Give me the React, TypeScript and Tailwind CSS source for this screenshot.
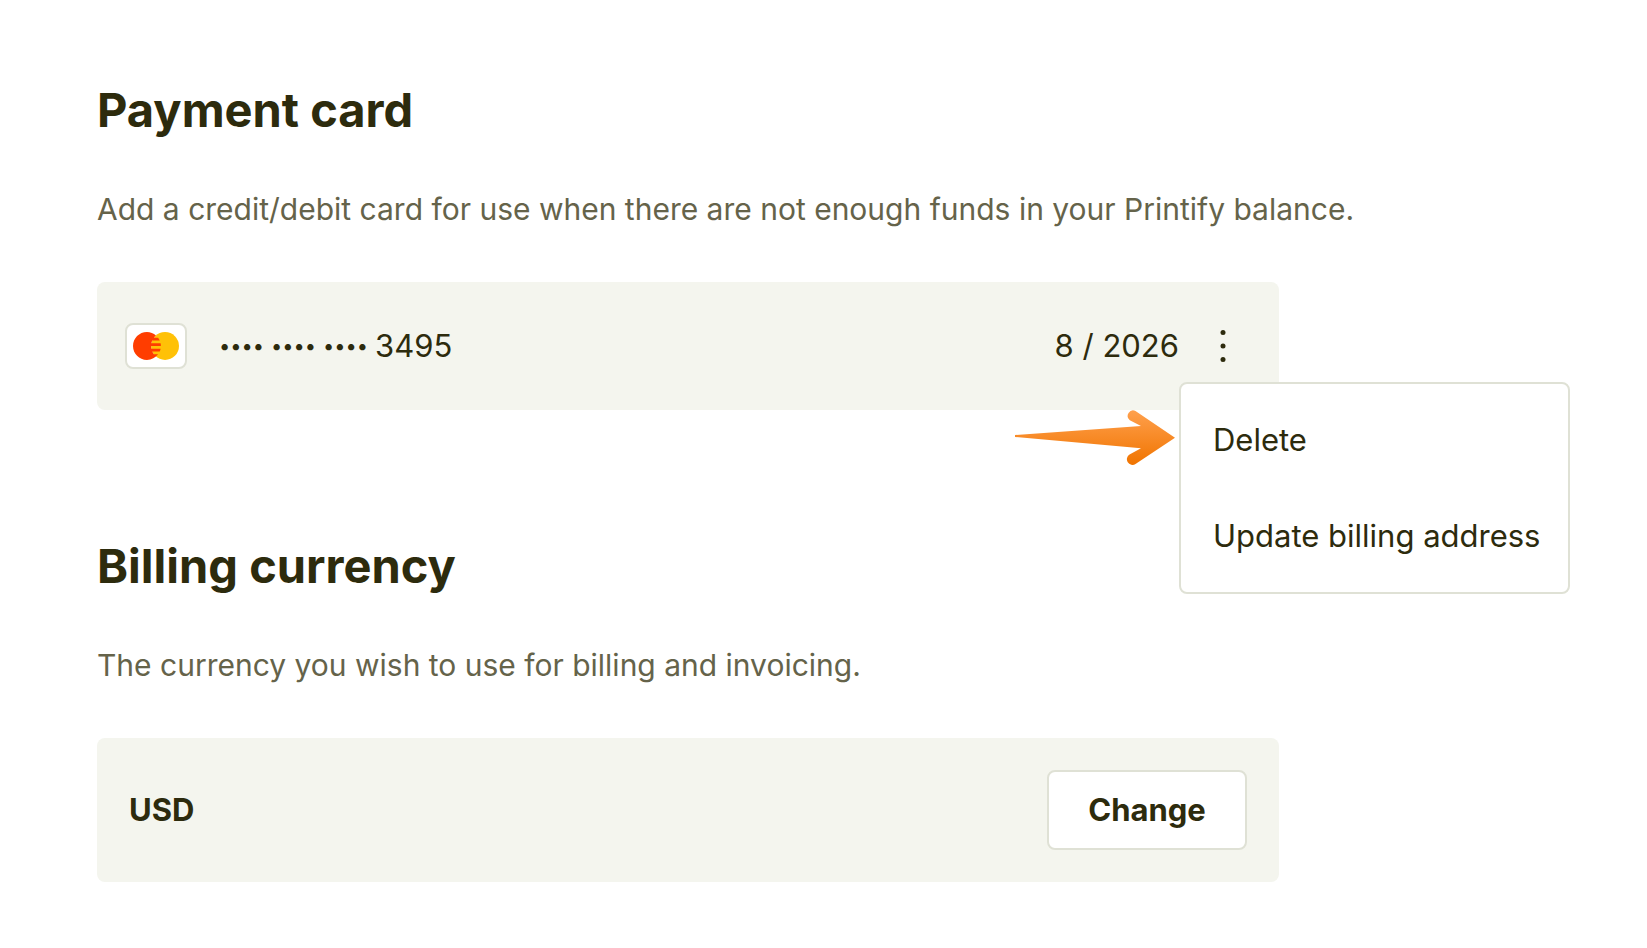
import { useState } from "react"

const menuItems = ["Delete", "Update billing address"]

function MastercardLogo() {
  return (
    <svg viewBox="7 14 33 20" className="h-7 w-[46px]" role="img" aria-label="Mastercard">
      <circle cx="30" cy="24" r="10" fill="#ffc107" />
      <path
        fill="#ff3d00"
        d="M22.014 30c-.464-.617-.863-1.284-1.176-2h5.325c.278-.636.496-1.304.637-2h-6.598C20.070 25.354 20 24.686 20 24h7c0-.686-.070-1.354-.201-2h-6.598c.142-.696.359-1.364.637-2h5.325c-.313-.716-.711-1.383-1.176-2h-2.973c.437-.580.930-1.122 1.481-1.595C21.747 14.909 19.481 14 17 14c-5.523 0-10 4.477-10 10s4.477 10 10 10c3.269 0 6.162-1.575 7.986-4H22.014z"
      />
    </svg>
  )
}

function ArrowPointer() {
  return (
    <svg viewBox="0 0 160 56" className="h-14 w-40" aria-hidden="true">
      <defs>
        <linearGradient id="arrow" x1="0" y1="0" x2="0" y2="1">
          <stop offset="0" stopColor="#ffa04d" />
          <stop offset="1" stopColor="#f07400" />
        </linearGradient>
      </defs>
      <path
        d="M0 25L126 16L114.800 10.200A5.500 5.500 0 0 1 120.500 0.900L160 27.700L120.500 54A5.500 5.500 0 0 1 114.500 44.500L126 38.200L0 27Z"
        fill="url(#arrow)"
      />
    </svg>
  )
}

export default function App() {
  const [open, setOpen] = useState(true)

  return (
    <main className="min-h-screen bg-white px-[97px] pt-[78px] pb-16 font-['Inter',sans-serif] text-[31px] leading-[48px] text-[#2d2b0d]">
      <section>
        <h1 className="text-[47px] leading-[64px] font-bold">Payment card</h1>
        <p className="mt-[43px] text-[30px] text-[#65634a]">
          Add a credit/debit card for use when there are not enough funds in your Printify balance.
        </p>

        <div className="relative mt-[49px] flex h-32 max-w-[1182px] items-center rounded-lg bg-[#f4f5ee] pr-8 pl-7">
          <div className="flex h-[46px] w-[62px] items-center justify-center rounded-lg border-2 border-[#dfe1d5] bg-white">
            <MastercardLogo />
          </div>
          <div className="ml-8 flex items-center gap-[7px]">
            {[0, 1, 2].map((n) => (
              <span key={n} className="text-[20px]">
                ••••
              </span>
            ))}
            <span>3495</span>
          </div>
          <span className="ml-auto">8 / 2026</span>
          <button
            type="button"
            aria-label="Card options"
            aria-expanded={open}
            onClick={() => setOpen(!open)}
            className="ml-5 flex size-12 items-center justify-center"
          >
            <svg viewBox="0 0 48 48" className="size-12" fill="currentColor">
              <circle cx="24" cy="10.500" r="2.500" />
              <circle cx="24" cy="24" r="2.500" />
              <circle cx="24" cy="37.500" r="2.500" />
            </svg>
          </button>

          {open && (
            <div className="absolute top-[100px] left-[calc(100%-100px)] w-[391px] rounded-lg border-2 border-[#dfe1d5] bg-white py-2">
              {menuItems.map((item) => (
                <button
                  key={item}
                  type="button"
                  className="block h-24 w-full pl-8 text-left whitespace-nowrap"
                >
                  {item}
                </button>
              ))}
              <div className="absolute top-[26px] right-full mr-1.5">
                <ArrowPointer />
              </div>
            </div>
          )}
        </div>
      </section>

      <section className="mt-[124px]">
        <h2 className="text-[47px] leading-[64px] font-bold">Billing currency</h2>
        <p className="mt-[43px] text-[30px] text-[#65634a]">
          The currency you wish to use for billing and invoicing.
        </p>

        <div className="mt-[49px] flex h-36 max-w-[1182px] items-center justify-between rounded-lg bg-[#f4f5ee] px-8 font-bold">
          <span>USD</span>
          <button type="button" className="h-20 w-[200px] rounded-lg border-2 border-[#dfe1d5] bg-white">
            Change
          </button>
        </div>
      </section>
    </main>
  )
}
